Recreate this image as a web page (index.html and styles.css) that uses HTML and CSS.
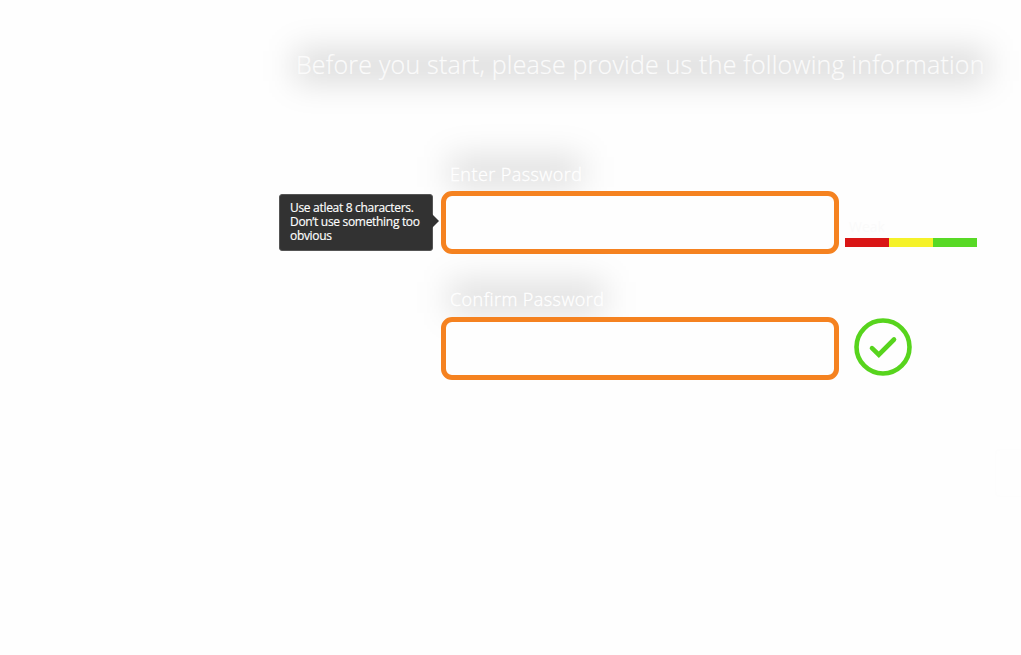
FILE: index.html
```html
<!DOCTYPE html>
<html lang="en">
<head>
<meta charset="utf-8">
<title>Set password</title>
<link rel="stylesheet" href="styles.css">
</head>
<body>
<main class="page">
  <h1 class="title glow">Before you start, please provide us the following information</h1>
  <form class="form">
    <label class="label glow" for="pw">Enter Password</label>
    <div class="row">
      <div class="tip">Use atleat 8 characters.<br>Don’t use something too<br>obvious</div>
      <input class="field" id="pw" type="password">
      <div class="strength">
        <span class="level">Weak</span>
        <div class="meter"><i class="red"></i><i class="yellow"></i><i class="green"></i></div>
      </div>
    </div>
    <label class="label glow second" for="confirm">Confirm Password</label>
    <div class="row">
      <input class="field" id="confirm" type="password">
      <svg class="check" viewBox="0 0 58 58" fill="none" stroke="#57d41d">
        <circle cx="29" cy="29" r="26.5" stroke-width="4.6"/>
        <path d="M18 30.2L24.8 36.7L40 21.5" stroke-width="4.6" stroke-linecap="round" stroke-linejoin="miter"/>
      </svg>
    </div>
  </form>
  <div class="side-tab"></div>
</main>
</body>
</html>
```
FILE: styles.css
```css
* { box-sizing: border-box; }
body {
  margin: 0;
  background: #fefefe;
  font-family: "Open Sans", "Noto Sans", sans-serif;
  overflow: hidden;
}
.page { position: relative; width: 1021px; height: 655px; padding: 47px 0 0 296px; overflow: hidden; }
.glow { position: relative; isolation: isolate; width: max-content; }
/* soft haze behind headings */
.glow::before {
  content: "";
  position: absolute;
  z-index: -1;
  inset: 3px -2px 0 -1px;
  background: rgba(0, 0, 0, 0.142);
  filter: blur(16px);
}
.title {
  margin: 0;
  font-size: 25px;
  line-height: 35px;
  font-weight: 300;
  letter-spacing: 0.2px;
  white-space: nowrap;
  color: #fbfbfb;
  -webkit-text-stroke: 0.2px #fbfbfb;
}
.form { padding: 81px 0 0 145px; }
.label {
  display: block;
  height: 28px;
  padding-left: 9px;
  font-size: 18px;
  line-height: 22px;
  font-weight: 300;
  letter-spacing: 0.43px;
  color: #fff;
  -webkit-text-stroke: 0.3px #fff;
}
.label.glow::before {
  inset: -7px 0 3px 8px;
  background: rgba(0, 0, 0, 0.122);
}
.second { margin-top: 34px; height: 29px; }
.row { position: relative; display: flex; }
.field {
  width: 398px;
  height: 63px;
  padding: 0 14px;
  border: 5px solid #f58220;
  border-radius: 11px;
  background: #fefefe;
  font: inherit;
  outline: none;
}
.tip {
  position: absolute;
  left: -162px;
  top: 3px;
  width: 154px;
  height: 57px;
  padding: 6px 10px;
  border: 1px solid #555;
  border-radius: 3px;
  background: #323232;
  color: #fff;
  font-size: 12px;
  line-height: 14px;
  letter-spacing: -0.31px;
  -webkit-text-stroke: 0.15px #fff;
  white-space: nowrap;
}
.tip::after {
  content: "";
  position: absolute;
  left: 152px;
  top: 19px;
  border: 7px solid transparent;
  border-left-color: #323232;
  border-right: 0;
}
.strength { width: 132px; margin-left: 6px; padding-top: 26px; }
.level {
  display: block;
  height: 21px;
  padding-left: 4px;
  font-size: 14px;
  line-height: 20px;
  color: #fafafa;
}
.meter { display: flex; height: 9px; }
.meter i { flex: 1; }
.red { background: #d91515; }
.yellow { background: #f5f229; }
.green { background: #58d926; }
.check { width: 58px; height: 58px; margin: 1px 0 0 15px; }
.side-tab {
  position: absolute;
  right: -4px;
  top: 449px;
  width: 30px;
  height: 48px;
  border: 1px solid #fdfdfd;
  border-radius: 5px;
}
```
